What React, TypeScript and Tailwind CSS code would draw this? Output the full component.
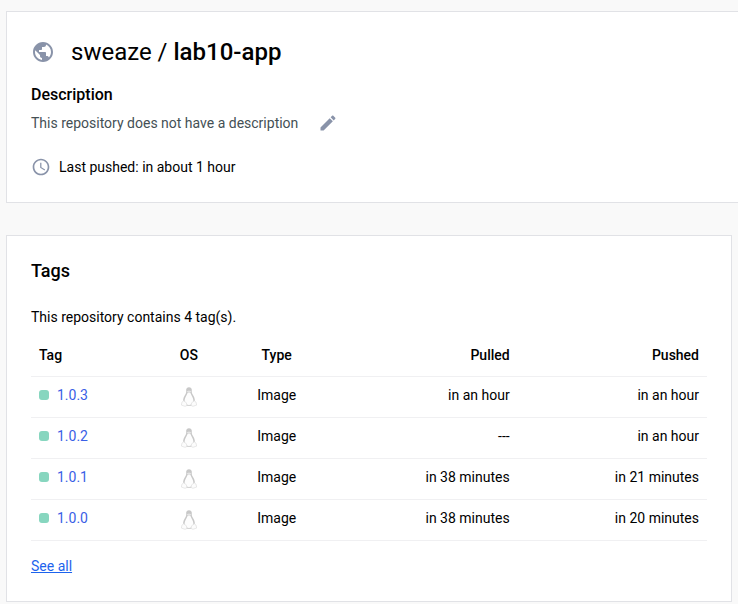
type TagRow = { tag: string; type: string; pulled: string; pushed: string };

const rows: TagRow[] = [
  { tag: "1.0.3", type: "Image", pulled: "in an hour", pushed: "in an hour" },
  { tag: "1.0.2", type: "Image", pulled: "---", pushed: "in an hour" },
  { tag: "1.0.1", type: "Image", pulled: "in 38 minutes", pushed: "in 21 minutes" },
  { tag: "1.0.0", type: "Image", pulled: "in 38 minutes", pushed: "in 20 minutes" },
];

function GlobeIcon() {
  return (
    <svg viewBox="0 0 24 24" className="size-6 shrink-0 fill-[#8993a9]" aria-hidden="true">
      <path d="M12 2C6.48 2 2 6.48 2 12s4.48 10 10 10 10-4.48 10-10S17.52 2 12 2zm-1 17.93c-3.95-.49-7-3.85-7-7.93 0-.62.08-1.21.21-1.79L9 15v1c0 1.1.9 2 2 2v1.93zm6.9-2.54c-.26-.81-1-1.39-1.9-1.39h-1v-3c0-.55-.45-1-1-1H8v-2h2c.55 0 1-.45 1-1V7h2c1.1 0 2-.9 2-2v-.41c2.93 1.19 5 4.06 5 7.41 0 2.08-.8 3.97-2.1 5.39z" />
    </svg>
  );
}

function PencilIcon() {
  return (
    <svg viewBox="0 0 24 24" className="size-5 fill-[#8993a9]" aria-hidden="true">
      <path d="M3 17.25V21h3.75L17.81 9.94l-3.75-3.75L3 17.25zM20.71 7.04c.39-.39.39-1.02 0-1.41l-2.34-2.34c-.39-.39-1.02-.39-1.41 0l-1.83 1.83 3.75 3.75 1.83-1.83z" />
    </svg>
  );
}

function ClockIcon() {
  return (
    <svg viewBox="0 0 24 24" className="size-5 shrink-0 fill-[#8993a9]" aria-hidden="true">
      <path d="M11.99 2C6.47 2 2 6.48 2 12s4.47 10 9.99 10C17.52 22 22 17.52 22 12S17.52 2 11.99 2zM12 20c-4.42 0-8-3.58-8-8s3.58-8 8-8 8 3.58 8 8-3.58 8-8 8zm.5-13H11v6l5.25 3.15.75-1.23-4.5-2.67z" />
    </svg>
  );
}

function LinuxIcon() {
  return (
    <svg viewBox="0 0 16 20" className="mx-auto h-5 w-4" role="img" aria-label="Linux">
      <path
        d="M8 .2C5.900 .2 5.100 1.500 5.200 3.300c.1 1.900 0 2.700-.9 4.100C3.100 9.200 1.900 11.600 2.100 14.200L5 18.800h6l2.900-4.600c.2-2.600-1-5-2.200-6.800-.9-1.400-1-2.200-.9-4.100C10.900 1.500 10.100.2 8 .2z"
        fill="#c8c8c8"
      />
      <path
        d="M8 5.400c-1.500 0-1.800 1-2.100 2.200-.7 1.800-2.300 3.600-2.300 6.200 0 2.600 2 4.200 4.400 4.200s4.400-1.600 4.400-4.200c0-2.600-1.600-4.400-2.300-6.200C9.800 6.400 9.500 5.400 8 5.400z"
        fill="#fdfdfd"
      />
      <path d="M5.900 4.200 8 3.400l2.100.8v.9L8 6.200l-2.100-1.100z" fill="#e4e4e4" />
      <path
        d="M2.700 13.800.9 15.200l-.5 2.900 3.700 1.200 2-.9-.8-2.700zM13.300 13.800l1.800 1.400.5 2.900-3.700 1.200-2-.9.8-2.700z"
        fill="#fcfcfc"
        stroke="#dedede"
        strokeWidth=".7"
        strokeLinejoin="round"
      />
    </svg>
  );
}

export default function App() {
  return (
    <main className="min-h-screen overflow-x-hidden bg-[#f9f9f9] pt-[11px] pl-[6px] font-[Roboto,sans-serif] text-sm leading-5 text-black">
      <section className="border border-r-0 border-[#e1e2e6] bg-white px-6 pt-6 pb-[25px]">
        <div className="flex items-center gap-4">
          <GlobeIcon />
          <h1 className="text-2xl leading-8">
            sweaze / <strong className="font-medium">lab10-app</strong>
          </h1>
        </div>
        <h2 className="mt-[17px] text-base leading-5 font-medium">Description</h2>
        <div className="mt-2 flex items-center gap-5">
          <p className="text-[#445055]">This repository does not have a description</p>
          <button type="button" aria-label="Edit description">
            <PencilIcon />
          </button>
        </div>
        <div className="mt-6 flex items-center gap-2">
          <ClockIcon />
          <p>Last pushed: in about 1 hour</p>
        </div>
      </section>

      <section className="mt-8 mr-[6px] border border-[#e1e2e6] bg-white px-6 pt-[23px]">
        <h2 className="text-lg leading-6 font-medium">Tags</h2>
        <p className="mt-6">This repository contains 4 tag(s).</p>
        <table className="mt-2 w-full table-fixed">
          <thead>
            <tr className="h-[41px] border-b border-[#f0f0f2]">
              <th className="w-[17%] px-2 text-left font-medium">Tag</th>
              <th className="w-[13%] pr-0.5 font-medium">OS</th>
              <th className="w-[13%] pr-0.5 font-medium">Type</th>
              <th className="w-[29%] px-2 text-right font-medium">Pulled</th>
              <th className="px-2 text-right font-medium">Pushed</th>
            </tr>
          </thead>
          <tbody>
            {rows.map((row) => (
              <tr key={row.tag} className="h-[41px] border-b border-[#f0f0f2]">
                <td className="px-2 pb-1">
                  <div className="flex items-center gap-2">
                    <span className="size-[10px] rounded-[3px] bg-[#87d6bf]" />
                    <a href="#" className="text-[#3a60e6]">
                      {row.tag}
                    </a>
                  </div>
                </td>
                <td className="pr-0.5">
                  <LinuxIcon />
                </td>
                <td className="pr-0.5 pb-1 text-center">{row.type}</td>
                <td className="px-2 pb-1 text-right">{row.pulled}</td>
                <td className="px-2 pb-1 text-right">{row.pushed}</td>
              </tr>
            ))}
          </tbody>
        </table>
        <p className="pt-[15px] pb-[25px]">
          <a href="#" className="text-[#1d63ed] underline">
            See all
          </a>
        </p>
      </section>
    </main>
  );
}
